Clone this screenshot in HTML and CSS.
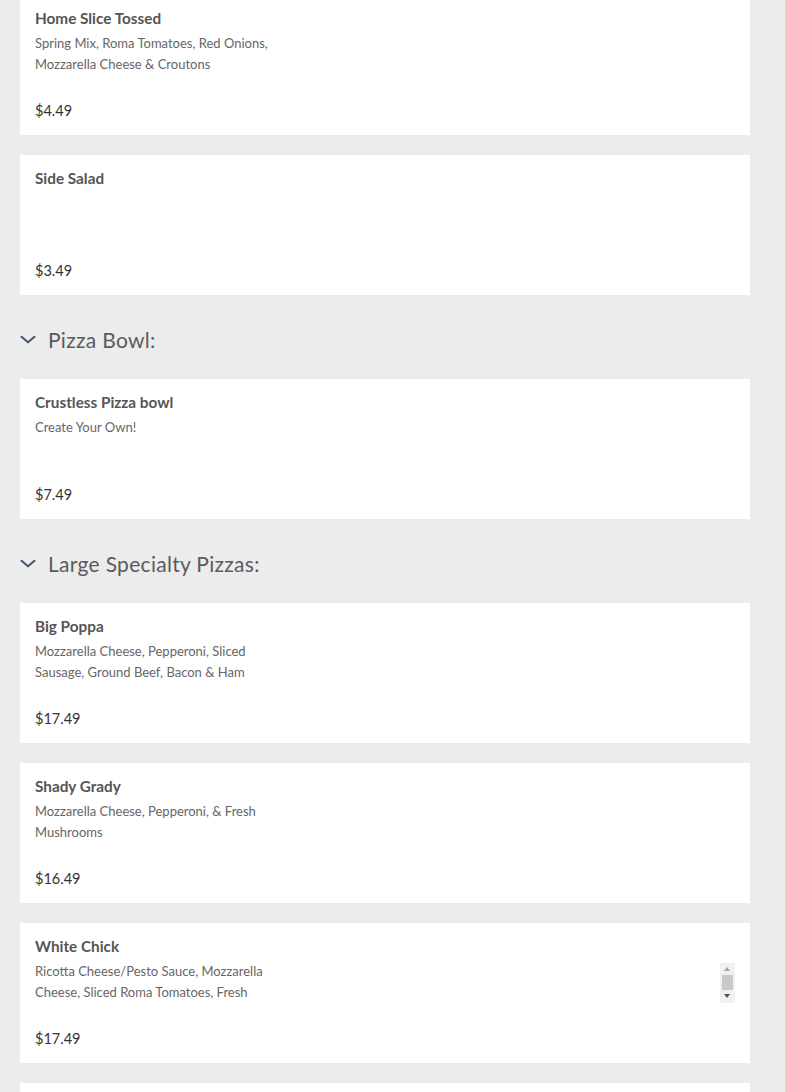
FILE: index.html
```html
<!DOCTYPE html>
<html>
<head>
<meta charset="utf-8">
<link rel="stylesheet" href="styles.css">
</head>
<body>
<main class="menu">
  <section class="section">
    <div class="card">
      <h3 class="item-title">Home Slice Tossed</h3>
      <div class="item-desc"><p>Spring Mix, Roma Tomatoes, Red Onions, Mozzarella Cheese &amp; Croutons</p></div>
      <div class="item-price">$4.49</div>
    </div>
    <div class="card">
      <h3 class="item-title">Side Salad</h3>
      <div class="item-desc"></div>
      <div class="item-price">$3.49</div>
    </div>
  </section>

  <section class="section">
    <h2 class="section-head">
      <svg class="chev" width="16" height="10" viewBox="0 0 16 10"><path d="M1.5 1.8 L8 7.3 L14.5 1.8" fill="none" stroke="#45556b" stroke-width="2.1" stroke-linecap="round" stroke-linejoin="round"/></svg>
      <span>Pizza Bowl:</span>
    </h2>
    <div class="card">
      <h3 class="item-title">Crustless Pizza bowl</h3>
      <div class="item-desc"><p>Create Your Own!</p></div>
      <div class="item-price">$7.49</div>
    </div>
  </section>

  <section class="section">
    <h2 class="section-head">
      <svg class="chev" width="16" height="10" viewBox="0 0 16 10"><path d="M1.5 1.8 L8 7.3 L14.5 1.8" fill="none" stroke="#45556b" stroke-width="2.1" stroke-linecap="round" stroke-linejoin="round"/></svg>
      <span>Large Specialty Pizzas:</span>
    </h2>
    <div class="card">
      <h3 class="item-title">Big Poppa</h3>
      <div class="item-desc"><p>Mozzarella Cheese, Pepperoni, Sliced Sausage, Ground Beef, Bacon &amp; Ham</p></div>
      <div class="item-price">$17.49</div>
    </div>
    <div class="card">
      <h3 class="item-title">Shady Grady</h3>
      <div class="item-desc"><p>Mozzarella Cheese, Pepperoni, &amp; Fresh Mushrooms</p></div>
      <div class="item-price">$16.49</div>
    </div>
    <div class="card">
      <h3 class="item-title">White Chick</h3>
      <div class="item-desc scroll">
        <p>Ricotta Cheese/Pesto Sauce, Mozzarella Cheese, Sliced Roma Tomatoes, Fresh Garlic &amp; Basil</p>
        <div class="fake-scrollbar">
          <span class="arrow up"></span>
          <span class="thumb"></span>
          <span class="arrow down"></span>
        </div>
      </div>
      <div class="item-price">$17.49</div>
    </div>
    <div class="card card-partial"></div>
  </section>
</main>
</body>
</html>
```

FILE: styles.css
```css
html, body {
  margin: 0;
  padding: 0;
  background: #ececec;
  font-family: Lato, "Open Sans", "Liberation Sans", sans-serif;
  overflow: hidden;
}

.menu {
  margin-top: -5px;
  padding: 0 35px 0 20px;
}

.section {
  display: flex;
  flex-direction: column;
}

.card {
  background: #fff;
  height: 140px;
  box-sizing: border-box;
  padding: 15px 15px 0 15px;
  margin-bottom: 20px;
  display: flex;
  flex-direction: column;
}

.section .card:last-child {
  margin-bottom: 0;
}

.item-title {
  margin: 0;
  font-size: 15.3px;
  line-height: 16px;
  font-weight: 700;
  color: #555;
}

.item-desc {
  position: relative;
  margin-top: 7px;
  height: 42px;
  overflow: hidden;
}

.item-desc p {
  margin: 0;
  max-width: 240px;
  font-size: 13px;
  line-height: 21px;
  color: #666;
}

.fake-scrollbar {
  position: absolute;
  right: 0;
  top: 2px;
  width: 15px;
  height: 40px;
  background: #f1f1f1;
}

.fake-scrollbar .thumb {
  position: absolute;
  left: 2px;
  right: 2px;
  top: 12px;
  height: 15px;
  background: #c9c9c9;
}

.fake-scrollbar .arrow {
  position: absolute;
  left: 4px;
  width: 0;
  height: 0;
  border-left: 3.5px solid transparent;
  border-right: 3.5px solid transparent;
}

.fake-scrollbar .arrow.up {
  top: 4px;
  border-bottom: 4px solid #a3a3a3;
}

.fake-scrollbar .arrow.down {
  bottom: 5px;
  border-top: 4px solid #505050;
}

.item-price {
  margin-top: 28px;
  font-size: 14.5px;
  line-height: 16px;
  color: #333;
}

.section-head {
  display: flex;
  align-items: center;
  gap: 12px;
  margin: 0;
  padding: 30px 0 24px 0;
  height: 30px;
  box-sizing: content-box;
  font-size: 21px;
  line-height: 30px;
  font-weight: 400;
  letter-spacing: 0.3px;
  color: #5b5b5b;
}

.chev {
  display: block;
  flex: none;
}
```
